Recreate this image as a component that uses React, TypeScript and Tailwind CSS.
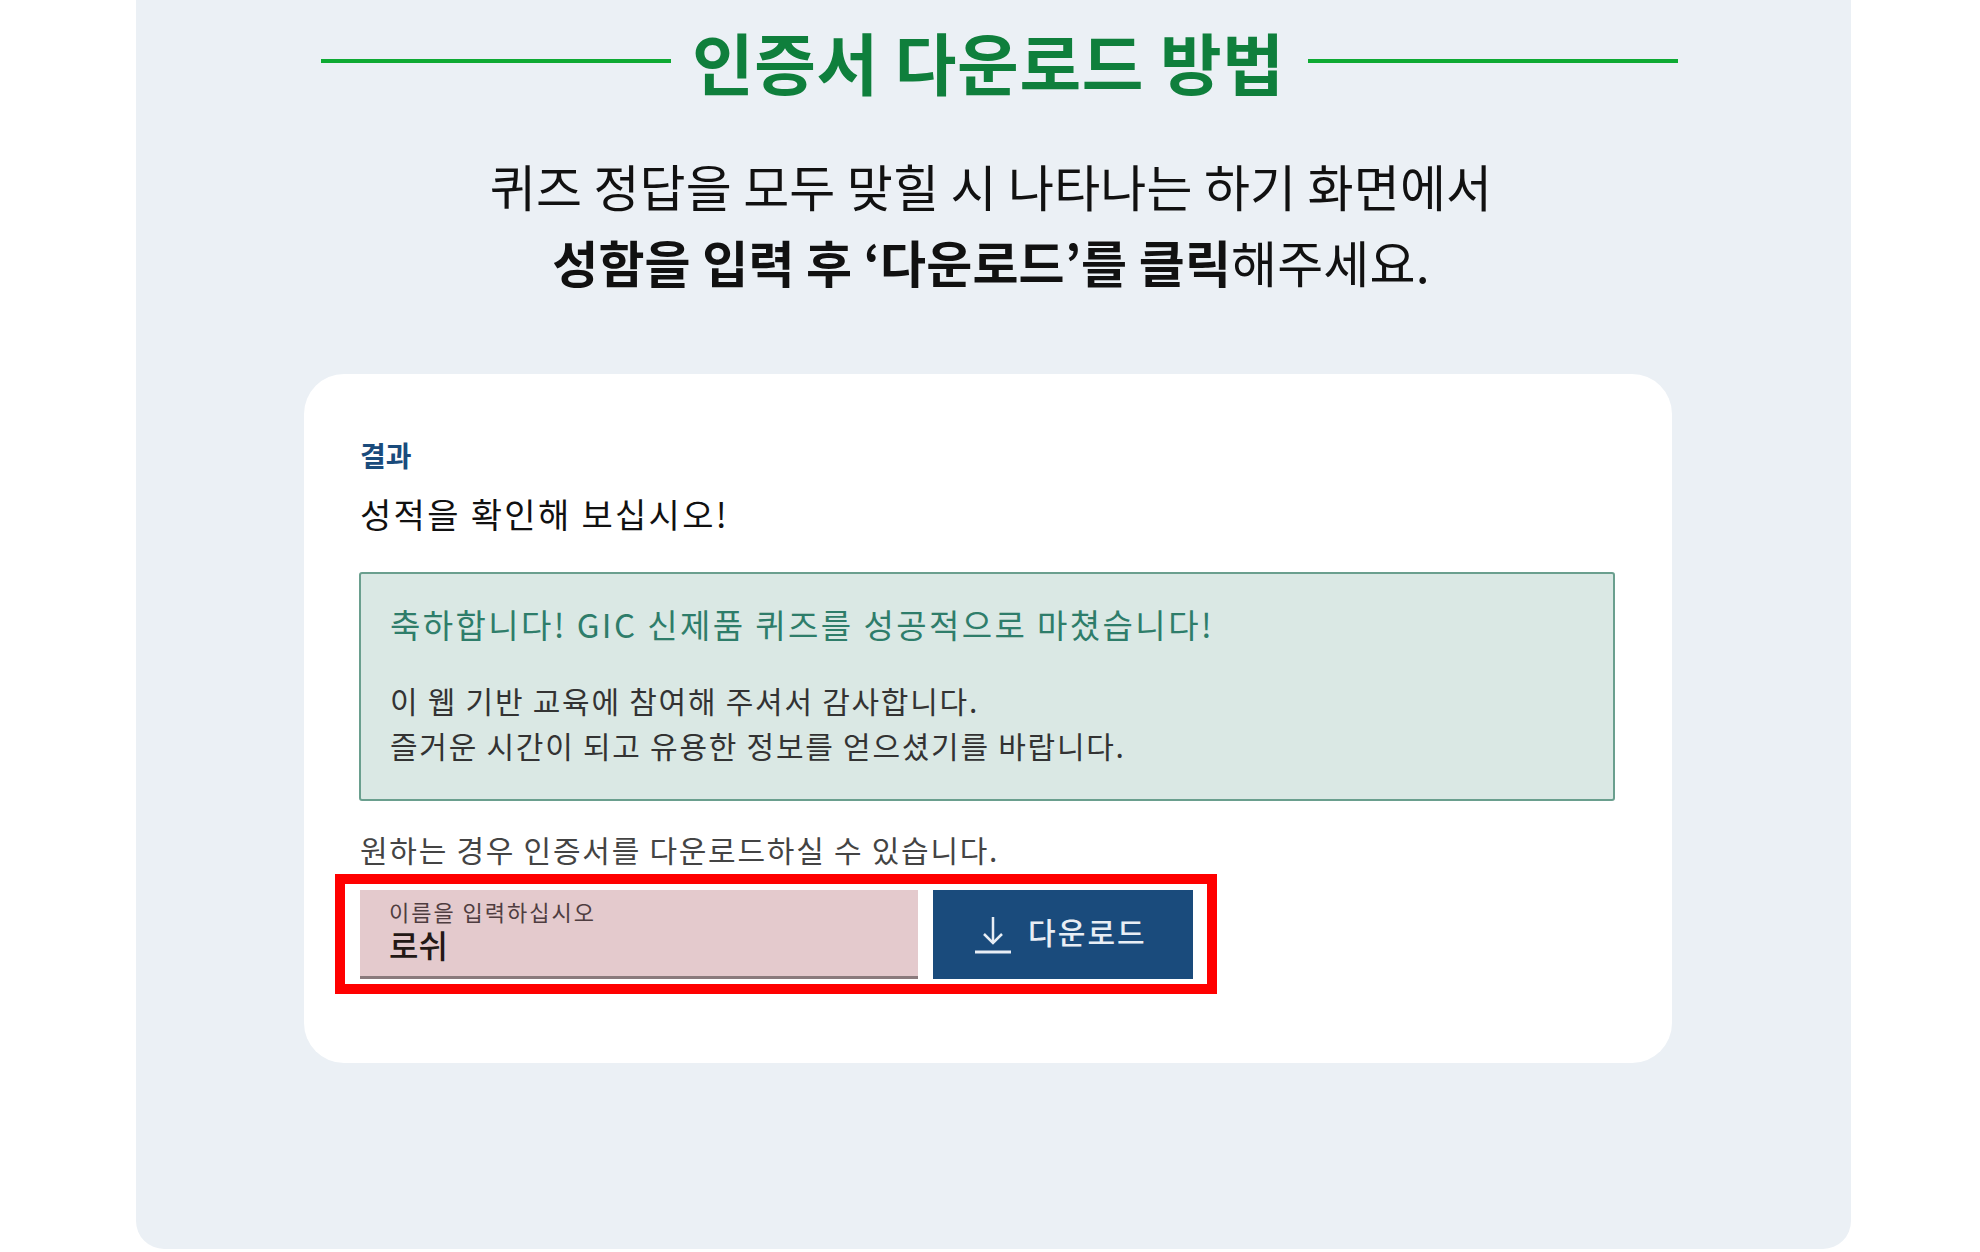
const FONT = '[font-family:"Noto_Sans_CJK_KR","Liberation_Sans",sans-serif]';

function DownloadIcon() {
  return (
    <svg width="38" height="38" viewBox="0 0 38 38" fill="none" stroke="#e8eef5" strokeWidth="2.5">
      <path d="M19 1v26" />
      <path d="M10 18l9 9 9-9" />
      <path d="M1 36h36" strokeWidth="3" />
    </svg>
  );
}

function NameForm() {
  return (
    <div className="-ml-[25px] mt-[5px] flex h-[120px] w-[882px] gap-[15px] border-[10px] border-[#ff0000] bg-white pb-[4px] pl-[15px] pt-[6px]">
      <div className="flex h-[89px] w-[558px] flex-col border-b-[3px] border-[#8a7a7c] bg-[#e4cacd] pl-[29px] pt-[7px]">
        <span className="text-[22px] leading-[28px] tracking-[0.09em] text-[#4f3d40]">이름을 입력하십시오</span>
        <span className="text-[32px] font-medium leading-[38px] text-[#231815]">로쉬</span>
      </div>
      <button type="button" className="flex h-[89px] w-[260px] items-center gap-[16px] bg-[#1a4b7c] pl-[41px]">
        <DownloadIcon />
        <span className="mb-[7px] text-[30px] font-medium leading-[40px] tracking-[0.07em] text-[#e8eef5]">다운로드</span>
      </button>
    </div>
  );
}

export default function App() {
  return (
    <div className={`h-[1252px] w-[1980px] overflow-hidden bg-white ${FONT}`}>
      <div className="ml-[136px] h-[1249px] w-[1715px] rounded-b-[28px] bg-[#ebf0f5] pt-[21px]">
        {/* Title */}
        <div className="flex h-[80px] items-center pl-[185px]">
          <div className="h-[4px] w-[350px] bg-[#0eaa33]" />
          <h1 className="ml-[21px] text-[67px] font-bold leading-[80px] tracking-[0.01em] text-[#0f7f3c]">인증서 다운로드 방법</h1>
          <div className="ml-[23px] h-[4px] w-[370px] bg-[#0eaa33]" />
        </div>

        {/* Description */}
        <div className="mt-[46px] pr-[5px] text-center text-[50px] leading-[76px] tracking-[0.003em] text-[#111111]">
          <p>퀴즈 정답을 모두 맞힐 시 나타나는 하기 화면에서</p>
          <p>
            <span className="font-bold">성함을 입력 후 ‘다운로드’를 클릭</span>해주세요.
          </p>
        </div>

        {/* Result card */}
        <div className="ml-[168px] mt-[75px] h-[689px] w-[1368px] rounded-[40px] bg-white pl-[56px] pt-[66px]">
          <div className="text-[28px] font-bold leading-[30px] text-[#1a4b7c]">결과</div>
          <div className="mt-[22px] text-[34px] leading-[44px] tracking-[0.068em] text-[#111111]">성적을 확인해 보십시오!</div>

          <div className="-ml-px mt-[36px] h-[229px] w-[1256px] rounded-[3px] border-2 border-[#6a9f8e] bg-[#dae8e4] pl-[29px] pt-[30px]">
            <p className="text-[33px] leading-[40px] tracking-[0.073em] text-[#2e7d6a]">축하합니다! GIC 신제품 퀴즈를 성공적으로 마쳤습니다!</p>
            <div className="mt-[34px] text-[30px] leading-[45px] tracking-[0.058em] text-[#333333]">
              <p>이 웹 기반 교육에 참여해 주셔서 감사합니다.</p>
              <p>즐거운 시간이 되고 유용한 정보를 얻으셨기를 바랍니다.</p>
            </div>
          </div>

          <p className="mt-[28px] text-[30px] leading-[40px] tracking-[0.058em] text-[#444444]">원하는 경우 인증서를 다운로드하실 수 있습니다.</p>
          <NameForm />
        </div>
      </div>
    </div>
  );
}
